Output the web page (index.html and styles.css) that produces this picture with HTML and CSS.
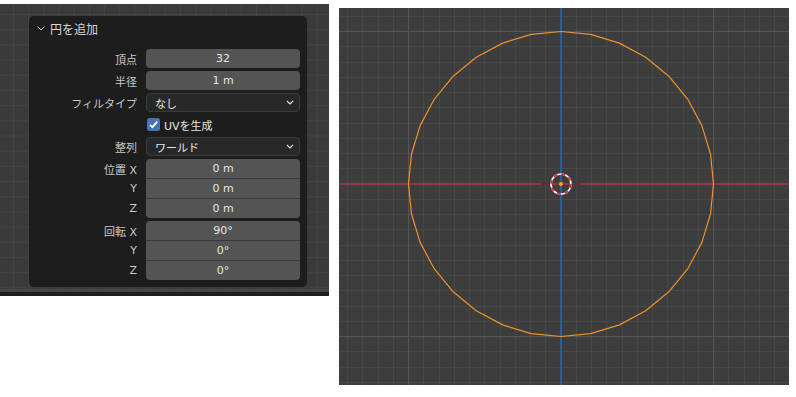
FILE: index.html
```html
<!DOCTYPE html>
<html lang="ja">
<head>
  <meta charset="UTF-8">
  <title>円を追加</title>
  <link rel="stylesheet" href="styles.css">
</head>
<body>
<div class="page">

  <!-- Левая часть: вьюпорт с панелью оператора -->
  <div class="editor">
    <div class="editor-grid">
      <div class="redo-panel">
        <div class="panel-header">
          <svg class="chev" width="8" height="5" viewBox="0 0 8 5"><path d="M0.5 0.5L4 4L7.5 0.5" fill="none" stroke="#bdbdbd" stroke-width="1"/></svg>
          <span>円を追加</span>
        </div>

        <div class="props">
          <div class="row"><span class="lbl">頂点</span><div class="field num">32</div></div>
          <div class="row"><span class="lbl">半径</span><div class="field num">1 m</div></div>
          <div class="row"><span class="lbl">フィルタイプ</span><div class="field menu"><span>なし</span><svg width="8" height="5" viewBox="0 0 8 5"><path d="M1 1L4 4L7 1" fill="none" stroke="#e0e0e0" stroke-width="1.2"/></svg></div></div>
          <div class="row">
            <span class="lbl"></span>
            <div class="check">
              <svg width="13" height="13" viewBox="0 0 13 13"><rect width="13" height="13" rx="2.5" fill="#4772b3"/><path d="M3 6.8L5.4 9.2L10.2 3.6" fill="none" stroke="#fff" stroke-width="1.8"/></svg>
              <span>UVを生成</span>
            </div>
          </div>
          <div class="row"><span class="lbl">整列</span><div class="field menu"><span>ワールド</span><svg width="8" height="5" viewBox="0 0 8 5"><path d="M1 1L4 4L7 1" fill="none" stroke="#e0e0e0" stroke-width="1.2"/></svg></div></div>

          <div class="group">
            <div class="row"><span class="lbl">位置 X</span><div class="field num">0 m</div></div>
            <div class="row"><span class="lbl">Y</span><div class="field num">0 m</div></div>
            <div class="row"><span class="lbl">Z</span><div class="field num">0 m</div></div>
          </div>

          <div class="group">
            <div class="row"><span class="lbl">回転 X</span><div class="field num">90°</div></div>
            <div class="row"><span class="lbl">Y</span><div class="field num">0°</div></div>
            <div class="row"><span class="lbl">Z</span><div class="field num">0°</div></div>
          </div>
        </div>
      </div>
    </div>
    <div class="timeline-edge"></div>
  </div>

  <!-- Правая часть: вид спереди с окружностью -->
  <svg class="viewport" width="450" height="377" viewBox="0 0 450 377">
    <rect width="450" height="377" fill="#3d3d3d"/>
    <!-- мелкая сетка -->
    <path stroke="#474747" stroke-width="1" fill="none" d="M8.5 0V377M23.5 0V377M39.5 0V377M54.5 0V377M84.5 0V377M100.5 0V377M115.5 0V377M130.5 0V377M145.5 0V377M161.5 0V377M176.5 0V377M191.5 0V377M206.5 0V377M237.5 0V377M252.5 0V377M267.5 0V377M283.5 0V377M298.5 0V377M313.5 0V377M328.5 0V377M344.5 0V377M359.5 0V377M389.5 0V377M405.5 0V377M420.5 0V377M435.5 0V377
      M0 8.5H450M0 38.5H450M0 54.5H450M0 69.5H450M0 84.5H450M0 99.5H450M0 115.5H450M0 130.5H450M0 145.5H450M0 160.5H450M0 191.5H450M0 206.5H450M0 221.5H450M0 237.5H450M0 252.5H450M0 267.5H450M0 282.5H450M0 298.5H450M0 313.5H450M0 343.5H450M0 359.5H450M0 374.5H450"/>
    <!-- крупная сетка -->
    <path stroke="#555555" stroke-width="1" fill="none" d="M69.5 0V377M374.5 0V377M0 23.5H450M0 328.5H450"/>
    <!-- оси -->
    <path stroke="#8c3a4a" stroke-width="2" d="M0 176H450"/>
    <path stroke="#2f5d92" stroke-width="2" d="M222 0V377"/>
    <!-- окружность, 32 вершины -->
    <polygon fill="none" stroke="#eb932e" stroke-width="1.2" stroke-linejoin="round"
      points="374.5,176 371.57,146.25 362.89,117.64 348.8,91.28 329.83,68.17 306.72,49.2 280.36,35.11 251.75,26.43 222,23.5 192.25,26.43 163.64,35.11 137.28,49.2 114.17,68.17 95.2,91.28 81.11,117.64 72.43,146.25 69.5,176 72.43,205.75 81.11,234.36 95.2,260.72 114.17,283.83 137.28,302.8 163.64,316.89 192.25,325.57 222,328.5 251.75,325.57 280.36,316.89 306.72,302.8 329.83,283.83 348.8,260.72 362.89,234.36 371.57,205.75"/>
    <!-- 3D-курсор -->
    <path stroke="rgba(0,0,0,0.25)" stroke-width="2" d="M202 176H212M232 176H242"/>
    <circle cx="222" cy="176" r="10" fill="none" stroke="#f2f2f2" stroke-width="1.6"/>
    <circle cx="222" cy="176" r="10" fill="none" stroke="#e0263a" stroke-width="1.6" stroke-dasharray="3.93 3.93"/>
    <circle cx="222" cy="176" r="2.4" fill="#ffa52a" stroke="#3a2a10" stroke-width="0.6"/>
  </svg>

</div>
</body>
</html>
```

FILE: styles.css
```css
body {
  margin: 0;
  background: #fff;
  font-family: "DejaVu Sans", "Noto Sans CJK JP", sans-serif;
}

.page {
  display: flex;
  align-items: flex-start;
}

/* Фон слева (вьюпорт под панелью) */
.editor {
  width: 329px;
  margin-top: 4px;
}

.editor-grid {
  height: 288px;
  box-sizing: border-box;
  padding: 12px 0 0 29px;
  background-color: #3a3a3a;
  background-image:
    linear-gradient(to right, #434343 1px, transparent 1px),
    linear-gradient(to bottom, #434343 1px, transparent 1px);
  background-size: 15.2px 15.2px;
  background-position: 13px 10px;
  box-shadow: inset 0 -3px 0 #464646;
}

.timeline-edge {
  height: 4px;
  background: #1f1f1f;
}

/* Панель оператора */
.redo-panel {
  width: 278px;
  height: 271px;
  box-sizing: border-box;
  padding: 0 7px 0 8px;
  background: #1d1d1d;
  border-radius: 5px;
}

.panel-header {
  height: 24px;
  display: flex;
  align-items: center;
  gap: 5px;
  color: #d6d6d6;
  font-size: 12px;
}

.chev {
  display: block;
}

.props {
  display: flex;
  flex-direction: column;
  gap: 3px;
  margin-top: 9px;
}

.row {
  display: flex;
  align-items: center;
  gap: 9px;
  height: 19px;
}

.lbl {
  width: 100px;
  flex: none;
  text-align: right;
  color: #c9c9c9;
  font-size: 11px;
  white-space: nowrap;
}

.field {
  width: 154px;
  height: 100%;
  box-sizing: border-box;
  display: flex;
  align-items: center;
  border-radius: 4px;
  color: #e6e6e6;
  font-size: 11px;
}

.num {
  background: #545454;
  justify-content: center;
}

.menu {
  background: #282828;
  border: 1px solid #3b3b3b;
  padding: 0 5px 0 8px;
  justify-content: space-between;
}

.check {
  display: flex;
  align-items: center;
  gap: 4px;
  margin-left: 1px;
  color: #e6e6e6;
  font-size: 11px;
}

.check svg {
  display: block;
}

/* Сгруппированные поля (位置 / 回転) */
.group {
  display: flex;
  flex-direction: column;
}

.group .field {
  border-radius: 0;
}

.group .row + .row {
  height: 20px;
}

.group .row + .row .field {
  border-top: 1px solid #3a3a3a;
}

.group .row:first-child .field {
  border-radius: 4px 4px 0 0;
}

.group .row:last-child .field {
  border-radius: 0 0 4px 4px;
}

/* Вьюпорт справа */
.viewport {
  display: block;
  margin: 8px 0 0 10px;
}
```
